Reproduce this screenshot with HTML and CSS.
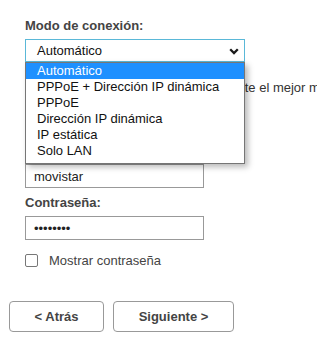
FILE: index.html
```html
<!DOCTYPE html>
<html lang="es">
<head>
<meta charset="utf-8">
<title>Modo de conexión</title>
<link rel="stylesheet" href="styles.css">
</head>
<body>
<div class="page">
  <div class="field">
    <div class="lbl">Modo de conexión:</div>
    <div class="select-wrap">
      <div class="select" role="combobox" aria-expanded="true">
        <span>Automático</span>
        <svg class="chev" width="10" height="7" viewBox="0 0 10 7"><path d="M1.2 1.2 L5 5 L8.8 1.2" fill="none" stroke="#1a1a1a" stroke-width="2.3"/></svg>
      </div>
      <ul class="listbox" role="listbox">
        <li class="opt sel">Automático</li>
        <li class="opt">PPPoE + Dirección IP dinámica</li>
        <li class="opt">PPPoE</li>
        <li class="opt">Dirección IP dinámica</li>
        <li class="opt">IP estática</li>
        <li class="opt">Solo LAN</li>
      </ul>
    </div>
  </div>
  <p class="hint">Marque Automático para que se detecte el mejor modo de conexión.</p>
  <div class="field user">
    <div class="lbl">Usuario:</div>
    <input class="txt" type="text" value="movistar">
  </div>
  <div class="field pass">
    <div class="lbl">Contraseña:</div>
    <input class="txt" type="password" value="12345678">
  </div>
  <label class="check">
    <span class="box"></span>
    <span>Mostrar contraseña</span>
  </label>
  <div class="buttons">
    <button class="btn back">&lt; Atrás</button>
    <button class="btn next">Siguiente &gt;</button>
  </div>
</div>
</body>
</html>
```
FILE: styles.css
```css
* { box-sizing: border-box; }
html, body { margin: 0; padding: 0; background: #fff; }
body {
  font-family: "Liberation Sans", Arial, sans-serif;
  font-size: 13px;
  line-height: 15px;
  color: #444;
  overflow: hidden;
}
.page {
  padding: 18px 0 0 25px;
}
.field {
  display: flex;
  flex-direction: column;
  gap: 6px;
}
.lbl {
  font-weight: bold;
  color: #444;
  line-height: 15px;
}
.select-wrap {
  position: relative;
  width: 220px;
}
.select {
  height: 23px;
  border: 1px solid #5ab8d8;
  background: #fff;
  display: flex;
  align-items: center;
  justify-content: space-between;
  padding: 0 5px 0 11px;
  color: #111;
}
.chev { display: block; margin-top: 1px; }
.listbox {
  position: absolute;
  left: 0;
  top: 23px;
  width: 220px;
  margin: 0;
  padding: 0 0 4px 0;
  list-style: none;
  background: #fff;
  border: 1px solid #767676;
  box-shadow: 3px 3px 6px rgba(0, 0, 0, 0.28);
  z-index: 5;
}
.opt {
  height: 16px;
  line-height: 16px;
  padding-left: 11px;
  color: #111;
  white-space: nowrap;
}
.opt.sel {
  background: #1e90ff;
  color: #fff;
}
.hint {
  margin: 18px 0 0 0;
  width: 292px;
  white-space: nowrap;
  overflow: hidden;
  color: #333;
  line-height: 15px;
}
.user { margin-top: 48px; }
.pass { margin-top: 7px; }
.txt {
  width: 179px;
  height: 24px;
  border: 1px solid #999;
  border-radius: 0;
  padding: 0 8px;
  font-family: "Liberation Sans", Arial, sans-serif;
  font-size: 13px;
  color: #222;
  background: #fff;
  outline: none;
  margin: 0;
}
.check {
  display: flex;
  align-items: center;
  gap: 11px;
  margin-top: 13px;
  color: #444;
}
.box {
  width: 13px;
  height: 13px;
  border: 1px solid #777;
  border-radius: 2px;
  background: #fff;
}
.buttons {
  display: flex;
  gap: 9px;
  margin: 33px 0 0 -16px;
}
.btn {
  height: 31px;
  border: 1px solid #999;
  border-radius: 4px;
  background: #fff;
  font-family: "Liberation Sans", Arial, sans-serif;
  font-size: 13px;
  font-weight: bold;
  color: #444;
  padding: 0;
}
.back { width: 95px; }
.next { width: 121px; }
```
